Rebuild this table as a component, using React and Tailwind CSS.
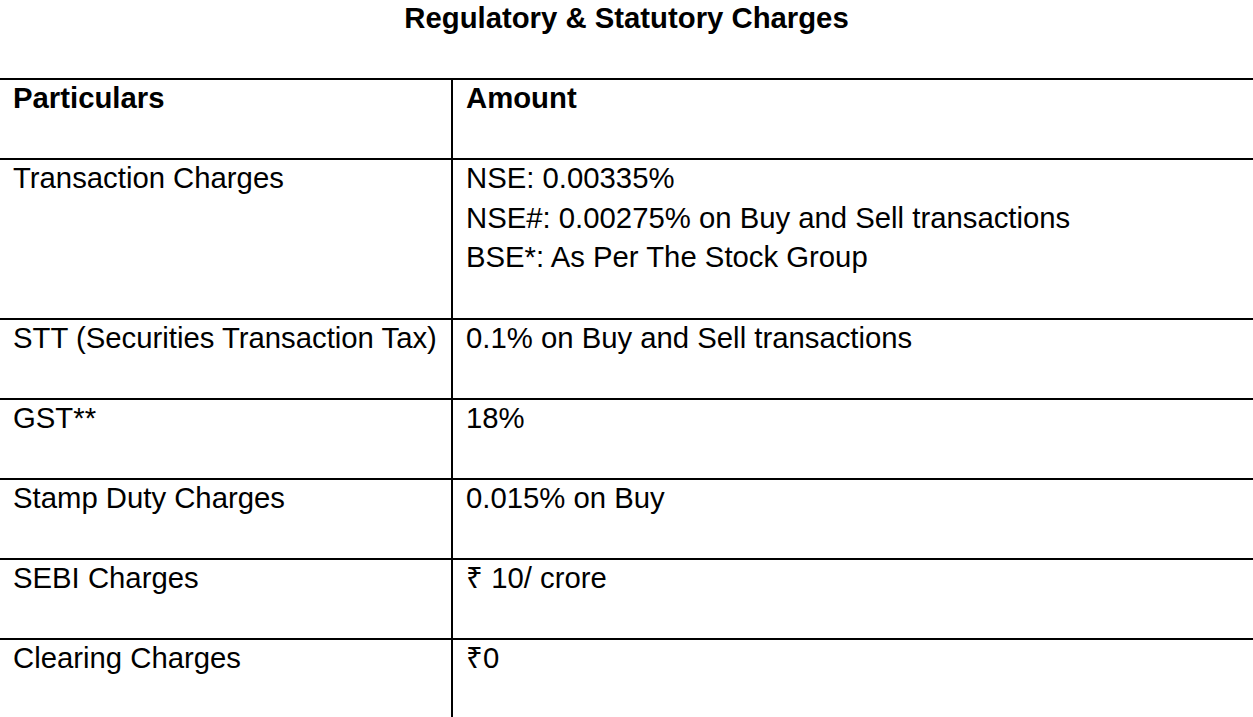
import React from "react";

const rows = [
  { p: "Transaction Charges", a: ["NSE: 0.00335%", "NSE#: 0.00275% on Buy and Sell transactions", "BSE*: As Per The Stock Group"] },
  { p: "STT (Securities Transaction Tax)", a: ["0.1% on Buy and Sell transactions"] },
  { p: "GST**", a: ["18%"] },
  { p: "Stamp Duty Charges", a: ["0.015% on Buy"] },
  { p: "SEBI Charges", a: ["₹ 10/ crore"] },
  { p: "Clearing Charges", a: ["₹0"] },
];

export default function App() {
  return (
    <div
      className="w-[1253px] h-[717px] overflow-hidden bg-white text-black"
      style={{ fontFamily: '"Liberation Sans", Arial, Helvetica, sans-serif' }}
    >
      <h1 className="text-center font-bold text-[29.3px] leading-[36px] h-[78px]">
        Regulatory &amp; Statutory Charges
      </h1>
      <div className="text-[29.3px] leading-[39.5px]">
        <div className="grid grid-cols-[451px_1fr] border-t-2 border-black h-[80px]">
          <div className="pl-[13px] -mt-[2px] font-bold">Particulars</div>
          <div className="border-l-2 border-black pl-[13px] font-bold">
            <div className="-mt-[2px]">Amount</div>
          </div>
        </div>
        {rows.map((r, i) => (
          <div
            key={i}
            className="grid grid-cols-[451px_1fr] border-t-2 border-black"
            style={{ height: 40 * r.a.length + 40 }}
          >
            <div className="pl-[13px] -mt-[2px] whitespace-nowrap">{r.p}</div>
            <div className="border-l-2 border-black pl-[13px]">
              <div className="-mt-[2px]">
                {r.a.map((t, j) => (
                  <div key={j}>{t}</div>
                ))}
              </div>
            </div>
          </div>
        ))}
      </div>
    </div>
  );
}
